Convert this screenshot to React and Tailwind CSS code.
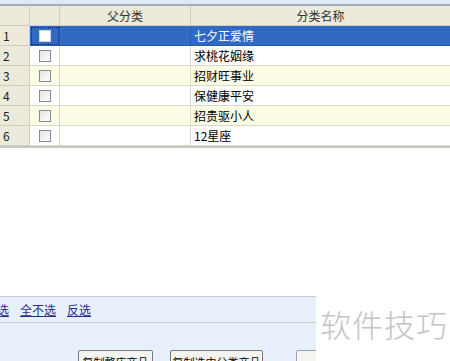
import React from "react";

const rows = [
  { id: 1, name: "七夕正爱情" },
  { id: 2, name: "求桃花姻缘" },
  { id: 3, name: "招财旺事业" },
  { id: 4, name: "保健康平安" },
  { id: 5, name: "招贵驱小人" },
  { id: 6, name: "12星座" },
];

const font = { fontFamily: '"SimSun", "Noto Sans CJK SC", sans-serif' };

const Box = () => (
  <span className="block w-[12px] h-[12px] border border-[#7f8c99] bg-gradient-to-br from-[#e4e4dc] to-white" />
);

export default function App() {
  return (
    <div
      className="w-[450px] h-[361px] bg-white overflow-hidden flex flex-col text-[12px] text-black"
      style={font}
    >
      {/* top strip */}
      <div className="h-[4px] shrink-0 bg-[#dde9f6]" />
      <div className="h-[2px] shrink-0 bg-[#a4adbc]" />

      {/* grid */}
      <div className="grid grid-cols-[30px_30px_131px_1fr] border-b-2 border-[#c8c8c0] shrink-0">
        <div className="h-[20px] bg-[#ebeadb] border-r border-b border-[#cfcdbd]" />
        <div className="h-[20px] bg-[#ebeadb] border-r border-b border-[#cfcdbd]" />
        <div className="h-[20px] bg-[#ebeadb] border-r border-b border-[#cfcdbd] flex items-center justify-center text-[#333]">
          父分类
        </div>
        <div className="h-[20px] bg-[#ebeadb] border-b border-[#cfcdbd] flex items-center justify-center text-[#333]">
          分类名称
        </div>

        {rows.map((r) => {
          const sel = r.id === 1;
          const alt = r.id % 2 === 1 && !sel;
          const cell = sel
            ? "bg-[#316ac5] border-[#2a5aaa]"
            : alt
            ? "bg-[#fdfde6] border-[#d8d8cc]"
            : "bg-white border-[#d8d8cc]";
          return (
            <React.Fragment key={r.id}>
              <div className="h-[20px] bg-[#ebeadb] border-r border-b border-[#cfcdbd] pl-[3px] flex items-center text-[#222]">
                {r.id}
              </div>
              <div
                className={`h-[20px] border-r border-b flex items-center justify-center ${cell} ${
                  sel ? "outline outline-1 outline-dotted outline-offset-[-2px] outline-[#0d2c6a]" : ""
                }`}
              >
                {sel ? (
                  <span className="block w-[12px] h-[12px] bg-white border border-[#c9d8f0]" />
                ) : (
                  <Box />
                )}
              </div>
              <div className={`h-[20px] border-r border-b ${cell}`} />
              <div
                className={`h-[20px] border-b pl-[3px] flex items-center ${cell} ${
                  sel ? "text-white" : "text-black"
                }`}
              >
                {r.name}
              </div>
            </React.Fragment>
          );
        })}
      </div>

      <div className="flex-1" />

      {/* bottom */}
      <div className="flex h-[65px] shrink-0">
        <div className="w-[316px] shrink-0 bg-[#e8f0fc] border-t border-[#c3cddb] overflow-hidden flex flex-col">
          <div className="h-[25px] shrink-0 flex items-center gap-[11px] ml-[-15px] text-[#2a2a8c] underline">
            <span>全选</span>
            <span>全不选</span>
            <span>反选</span>
          </div>
          <div className="h-[1px] shrink-0 bg-[#c3cddb]" />
          <div className="flex shrink-0 gap-[17px] pl-[78px] pt-[27px] whitespace-nowrap text-[11px]">
            <span className="h-[22px] w-[75px] shrink-0 flex justify-center pt-[3px] border border-[#7a7a7a] rounded-[2px] bg-[#f4f4f0]">
              复制整店商品
            </span>
            <span className="h-[22px] w-[93px] shrink-0 flex justify-center pt-[3px] border border-[#7a7a7a] rounded-[2px] bg-[#f4f4f0]">
              复制选中分类商品
            </span>
            <span className="ml-[16px] h-[22px] w-[60px] shrink-0 border border-[#9aa4b4] rounded-[2px] bg-[#f4f4f0]" />
          </div>
        </div>
        <div
          className="flex-1 flex items-start pl-[4px] pt-[12px] text-[31px] leading-none text-[#c4c4c4] tracking-[1px]"
          style={{ fontFamily: '"Noto Sans CJK SC", sans-serif', fontWeight: 300 }}
        >
          软件技巧
        </div>
      </div>
    </div>
  );
}
